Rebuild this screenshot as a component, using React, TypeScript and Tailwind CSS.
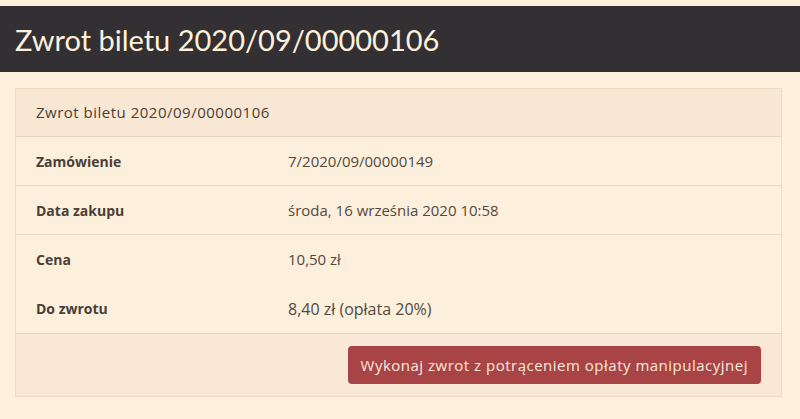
const rows = [
  { label: 'Zamówienie', value: '7/2020/09/00000149', border: true },
  { label: 'Data zakupu', value: 'środa, 16 września 2020 10:58', border: true },
  { label: 'Cena', value: '10,50 zł', border: false },
  { label: 'Do zwrotu', value: '8,40 zł (opłata 20%)', border: false },
];

export default function App() {
  return (
    <div className="min-h-[419px] bg-[#fdf0dc] pt-[6px] text-[#4a3f36] font-['Open_Sans',sans-serif]">
      <header className="h-[66px] bg-[#333033] flex items-center px-[15px]">
        <h1 className="text-[29px] font-['Lato',sans-serif] text-[#fdf0dc] leading-none">
          Zwrot biletu 2020/09/00000106
        </h1>
      </header>

      <div className="mx-[15px] mt-[16px] w-[767px] border border-[#ecdcc4] bg-[#fcefdc]">
        <div className="h-[48px] flex items-center px-[20px] bg-[#f8e7d3] border-b border-[#e6d4bd] text-[15px] tracking-[0.5px]">
          Zwrot biletu 2020/09/00000106
        </div>

        {rows.map((r) => (
          <div
            key={r.label}
            className={`h-[49px] flex items-center ${r.border ? 'border-b border-[#ead9c2]' : ''}`}
          >
            <div className="w-[272px] pl-[20px] text-[14px] font-bold">{r.label}</div>
            <div className={`text-[#54493f] ${r.label === 'Do zwrotu' ? 'text-[16px]' : 'text-[15px]'}`}>
              {r.value}
            </div>
          </div>
        ))}

        <div className="h-[63px] flex items-center justify-end pr-[20px] bg-[#f8e8d5] border-t border-[#e6d4bd]">
          <button
            type="button"
            className="h-[38px] px-[13px] rounded bg-[#a84446] text-[#fbe9dc] text-[15px] tracking-[0.5px]"
          >
            Wykonaj zwrot z potrąceniem opłaty manipulacyjnej
          </button>
        </div>
      </div>
    </div>
  );
}
